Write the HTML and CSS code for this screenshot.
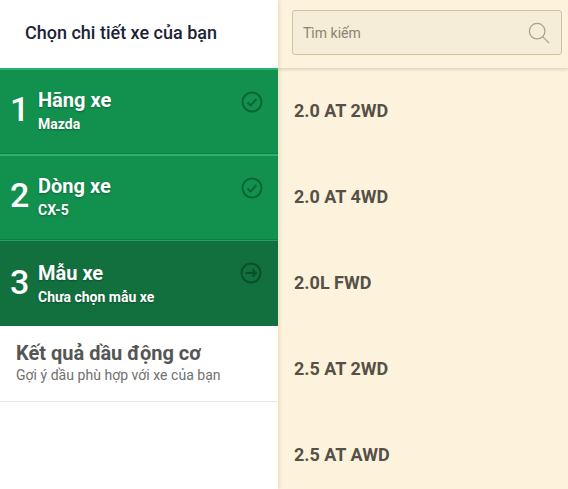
FILE: index.html
```html
<!DOCTYPE html>
<html lang="vi">
<head>
    <meta charset="UTF-8">
    <meta name="viewport" content="width=device-width, initial-scale=1.0">
    <title>Chọn chi tiết xe</title>
    <link rel="stylesheet" href="styles.css">
</head>
<body>
    <div class="page">
        <aside class="sidebar">
            <h1 class="sidebar-title">Chọn chi tiết xe của bạn</h1>

            <div class="step">
                <span class="step-number">1</span>
                <div class="step-text">
                    <div class="step-name">Hãng xe</div>
                    <div class="step-value">Mazda</div>
                </div>
                <svg class="step-icon" viewBox="0 0 22 22">
                    <circle cx="11" cy="11" r="9.5"/>
                    <path d="M6.5 11.5l3 3 6-6.5"/>
                </svg>
            </div>

            <div class="step">
                <span class="step-number">2</span>
                <div class="step-text">
                    <div class="step-name">Dòng xe</div>
                    <div class="step-value">CX-5</div>
                </div>
                <svg class="step-icon" viewBox="0 0 22 22">
                    <circle cx="11" cy="11" r="9.5"/>
                    <path d="M6.5 11.5l3 3 6-6.5"/>
                </svg>
            </div>

            <div class="step step-active">
                <span class="step-number">3</span>
                <div class="step-text">
                    <div class="step-name">Mẫu xe</div>
                    <div class="step-value">Chưa chọn mẫu xe</div>
                </div>
                <svg class="step-icon" viewBox="0 0 22 22">
                    <circle cx="11" cy="11" r="9.5"/>
                    <path d="M5.5 11h10.5M12.5 7.5l3.5 3.5-3.5 3.5"/>
                </svg>
            </div>

            <div class="result">
                <div class="result-title">Kết quả dầu động cơ</div>
                <div class="result-sub">Gợi ý dầu phù hợp với xe của bạn</div>
            </div>
        </aside>

        <main class="panel">
            <div class="search-bar">
                <div class="search-box">
                    <span class="search-text">Tìm kiếm</span>
                    <svg class="search-icon" viewBox="0 0 24 24">
                        <circle cx="10" cy="10" r="8.5"/>
                        <path d="M16 16l7 7"/>
                    </svg>
                </div>
            </div>
            <ul class="model-list">
                <li>2.0 AT 2WD</li>
                <li>2.0 AT 4WD</li>
                <li>2.0L FWD</li>
                <li>2.5 AT 2WD</li>
                <li>2.5 AT AWD</li>
            </ul>
        </main>
    </div>
</body>
</html>
```

FILE: styles.css
```css
* {
    margin: 0;
    padding: 0;
    box-sizing: border-box;
    font-family: Roboto, "Liberation Sans", sans-serif;
}

html,
body {
    height: 100%;
    overflow: hidden;
}

.page {
    display: flex;
    height: 489px;
    background-color: #fdf3dc;
}

.sidebar {
    width: 278px;
    flex-shrink: 0;
    background-color: #ffffff;
    box-shadow: 1px 0 4px rgba(120, 90, 40, 0.18);
    z-index: 1;
}

.sidebar-title {
    height: 68px;
    padding: 21px 0 0 25px;
    font-size: 18px;
    line-height: 24px;
    font-weight: 500;
    color: #1b2336;
}

.step {
    display: flex;
    height: 86px;
    padding: 18px 15px 0 10px;
    background-color: #12904e;
    border-top: 2px solid #2bb06f;
    border-bottom: 1px solid #0e7f43;
    color: #ffffff;
}

.step-active {
    background-color: #12703f;
    border-top: 1px solid #2a9c63;
    border-bottom: 0;
    padding-top: 20px;
    padding-right: 16px;
}

.step-number {
    width: 28px;
    margin-top: 2px;
    font-size: 34px;
    line-height: 38px;
    font-weight: 500;
}

.step-text {
    flex: 1;
}

.step-name {
    font-size: 20px;
    line-height: 24px;
    font-weight: 700;
    text-shadow: 0 1px 2px rgba(0, 0, 0, 0.3);
}

.step-value {
    margin-top: 3px;
    font-size: 14px;
    line-height: 18px;
    font-weight: 700;
    text-shadow: 0 1px 2px rgba(0, 0, 0, 0.3);
}

.step-icon {
    width: 22px;
    height: 22px;
    margin-top: 3px;
    fill: none;
    stroke: #0a6535;
    stroke-width: 2;
}

.step-active .step-icon {
    margin-top: 1px;
    stroke: #07502a;
}

.result {
    height: 76px;
    padding: 15px 0 0 16px;
    border-bottom: 1px solid #e6e6e6;
}

.result-title {
    font-size: 20px;
    line-height: 24px;
    font-weight: 700;
    color: #555555;
}

.result-sub {
    margin-top: 1px;
    font-size: 14px;
    line-height: 18px;
    letter-spacing: 0.03px;
    color: #6f6f6f;
}

.panel {
    flex: 1;
    min-width: 0;
}

.search-bar {
    height: 68px;
    padding: 10px 6px 0 14px;
    box-shadow: 0 2px 3px rgba(120, 100, 60, 0.2);
}

.search-box {
    display: flex;
    align-items: center;
    justify-content: space-between;
    height: 45px;
    padding: 0 11px 0 10px;
    background-color: #f6edd8;
    border: 1px solid #cfc29f;
    border-radius: 3px;
}

.search-text {
    font-size: 14px;
    color: #8a8373;
}

.search-icon {
    width: 22px;
    height: 22px;
    fill: none;
    stroke: #aaa388;
    stroke-width: 1.4;
}

.model-list {
    list-style: none;
}

.model-list li {
    height: 86px;
    padding-top: 32px;
    padding-left: 16px;
    font-size: 18px;
    line-height: 22px;
    font-weight: 700;
    color: #555048;
}
```
